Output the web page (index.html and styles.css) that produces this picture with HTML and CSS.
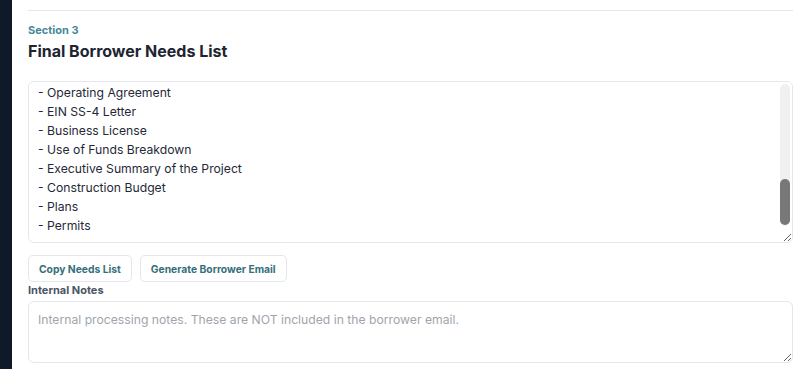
FILE: index.html
```html
<!DOCTYPE html>
<html lang="en">
<head>
<meta charset="utf-8">
<title>Final Borrower Needs List</title>
<link rel="stylesheet" href="styles.css">
</head>
<body>
<div class="app">
  <aside class="sidebar"></aside>
  <main class="main">
    <section class="section">
      <div class="eyebrow">Section 3</div>
      <h2 class="title">Final Borrower Needs List</h2>
      <div class="field-wrap">
        <textarea id="needs" class="field needs" spellcheck="false">- Government-issued Photo ID
- Personal Financial Statement
- Credit Authorization
- 2 Years Personal Tax Returns
- 2 Years Business Tax Returns
- YTD Profit &amp; Loss Statement
- Current Balance Sheet
- 3 Months Bank Statements
- Schedule of Real Estate Owned
- Purchase Contract
- Appraisal
- Title Commitment
- Evidence of Insurance
- Rent Roll
- Articles of Organization
- Certificate of Good Standing
- Resume / Experience Summary
- Entity Documents
- Operating Agreement
- EIN SS-4 Letter
- Business License
- Use of Funds Breakdown
- Executive Summary of the Project
- Construction Budget
- Plans
- Permits</textarea>
        <div class="scrollbar" aria-hidden="true"><div class="scroll-thumb"></div></div>
      </div>
      <div class="actions">
        <button class="btn" type="button">Copy Needs List</button>
        <button class="btn" type="button">Generate Borrower Email</button>
      </div>
      <label class="label" for="notes">Internal Notes</label>
      <textarea id="notes" class="field notes" placeholder="Internal processing notes. These are NOT included in the borrower email."></textarea>
    </section>
  </main>
</div>
<script src="script.js"></script>
</body>
</html>
```

FILE: styles.css
```css
* { box-sizing: border-box; }
html, body { margin: 0; padding: 0; background: #ffffff; }
body {
  font-family: Inter, "Noto Sans", "Liberation Sans", sans-serif;
  color: #1f2937;
  overflow: hidden;
}
.app {
  display: flex;
  min-height: 369px;
}
.sidebar {
  width: 12px;
  flex: none;
  background: #0f1a29;
}
.main {
  flex: 1;
  padding: 10px 13px 0 16px;
}
.section {
  border-top: 1px solid #e5e7eb;
  padding-top: 12px;
  display: flex;
  flex-direction: column;
}
.eyebrow {
  font-size: 11px;
  line-height: 14px;
  font-weight: 700;
  color: #45899a;
}
.title {
  margin: 3px 0 0;
  font-size: 16px;
  line-height: 22px;
  font-weight: 700;
  color: #1d2530;
}
.field {
  display: block;
  width: 100%;
  border: 1px solid #e3e6ea;
  border-radius: 6px;
  padding: 8px 9px;
  font-family: inherit;
  font-size: 12.2px;
  line-height: 19px;
  color: #1f2937;
  background: #fff;
  outline: none;
}
.field-wrap {
  position: relative;
  margin-top: 19px;
}
.needs {
  height: 162px;
  padding-bottom: 7px;
  padding-right: 24px;
  resize: vertical;
}
.scrollbar {
  position: absolute;
  top: 3px;
  right: 3px;
  width: 10px;
  height: 142px;
  border-radius: 5px;
  background: #f0f0f0;
  display: flex;
  flex-direction: column;
  justify-content: flex-end;
  padding-bottom: 1px;
  pointer-events: none;
}
.scroll-thumb {
  height: 46px;
  border-radius: 5px;
  background: #787878;
}
.notes {
  margin-top: 4px;
  height: 62px;
  resize: vertical;
}
.field::placeholder { color: #a0a5ad; }
.actions {
  display: flex;
  gap: 8px;
  margin-top: 12px;
}
.btn {
  height: 27px;
  padding: 0 10px;
  border: 1px solid #e3e6ea;
  border-radius: 5px;
  background: #fff;
  font-family: inherit;
  font-size: 10.3px;
  font-weight: 700;
  color: #356f7b;
  cursor: pointer;
}
.label {
  margin-top: 1px;
  font-size: 11px;
  line-height: 14px;
  font-weight: 700;
  color: #4b5563;
}
```

FILE: script.js
```js
var needs = document.getElementById('needs');
needs.scrollTop = needs.scrollHeight;
```
